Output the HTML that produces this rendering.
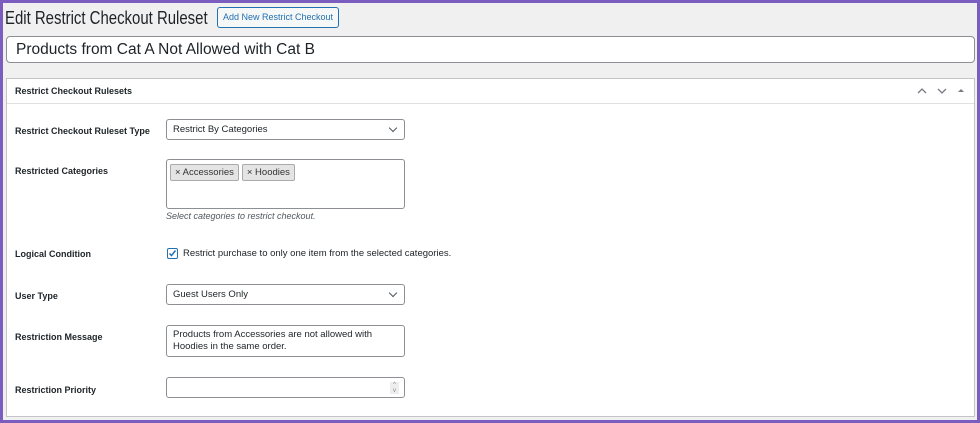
<!DOCTYPE html>
<html><head><style>
*{box-sizing:border-box}
body{margin:0;width:980px;height:423px;background:#7b5cbf;font-family:"Liberation Sans",sans-serif;color:#1d2327;overflow:hidden}
.wrap{position:absolute;left:3px;top:3px;right:3px;bottom:3px;background:#f0f0f1}
.abs{position:absolute;white-space:nowrap}
h1{position:absolute;left:2px;top:5px;margin:0;font-size:18px;font-weight:400;color:#1d2327;white-space:nowrap;transform:scaleX(0.83);transform-origin:left}
.btn{left:214px;top:4px;width:122px;height:21px;border:1px solid #2271b1;border-radius:3px;color:#2271b1;font-size:9px;line-height:19px;text-align:center;background:#f6f7f7}
.title{left:3px;top:33px;width:969px;height:27px;border:1px solid #8c8f94;border-radius:4px;background:#fff;font-size:15.5px;line-height:25px;padding-left:9px}
.panel{left:3px;top:75px;width:969px;height:339px;border:1px solid #c3c4c7;background:#fff}
.ph{height:25px;border-bottom:1px solid #e0e0e0;font-size:9px;font-weight:700;line-height:25px;padding-left:8px}
.lbl{font-size:9px;font-weight:700;left:8px}
.inp{left:159px;width:239px;border:1px solid #8c8f94;border-radius:3px;background:#fff;font-size:9.5px;padding-left:6px}
.chev{position:absolute;right:8px;top:5px;width:6px;height:6px;border-right:1.3px solid #50575e;border-bottom:1.3px solid #50575e;transform:rotate(45deg)}
.tag{display:inline-block;border:1px solid #aaa;background:#e4e4e4;border-radius:2px;font-size:9.5px;padding:2px 4px;margin:4px 0 0 3px;color:#333}
</style></head><body><div class="wrap">
<h1>Edit Restrict Checkout Ruleset</h1>
<div class="abs btn">Add New Restrict Checkout</div>
<div class="abs title">Products from Cat A Not Allowed with Cat B</div>
<div class="abs panel">
<div class="ph">Restrict Checkout Rulesets</div>
<svg class="abs" style="right:8px;top:7px" width="50" height="10"><path d="M2 7l4-4 4 4M22 3l4 4 4-4" stroke="#787c82" stroke-width="1.3" fill="none"/><path d="M42 6l3-3 3 3z" fill="#787c82"/></svg>
<div class="abs lbl" style="top:47px">Restrict Checkout Ruleset Type</div>
<div class="abs inp" style="top:40px;height:21px;line-height:19px">Restrict By Categories<span class="chev"></span></div>
<div class="abs lbl" style="top:87px">Restricted Categories</div>
<div class="abs inp" style="top:80px;height:50px;padding-left:0"><span class="tag">× Accessories</span><span class="tag">× Hoodies</span></div>
<div class="abs" style="left:159px;top:132px;font-size:9px;font-style:italic;color:#50575e">Select categories to restrict checkout.</div>
<div class="abs lbl" style="top:170px">Logical Condition</div>
<div class="abs" style="left:160px;top:169px;width:11px;height:11px;border:1px solid #2271b1;border-radius:2px"><svg width="9" height="9" style="position:absolute;left:0;top:0"><path d="M1.5 4.5l2 2 4-5" stroke="#2271b1" stroke-width="1.5" fill="none"/></svg></div>
<div class="abs" style="left:176px;top:169px;font-size:9.5px">Restrict purchase to only one item from the selected categories.</div>
<div class="abs lbl" style="top:212px">User Type</div>
<div class="abs inp" style="top:205px;height:21px;line-height:19px">Guest Users Only<span class="chev"></span></div>
<div class="abs lbl" style="top:253px">Restriction Message</div>
<div class="abs inp" style="top:246px;height:32px;line-height:12px;padding-top:3px">Products from Accessories are not allowed with<br>Hoodies in the same order.</div>
<div class="abs lbl" style="top:306px">Restriction Priority</div>
<div class="abs inp" style="top:298px;height:21px"><span style="position:absolute;right:5px;top:4px;width:9px;height:12px;background:#eee;font-size:6px;line-height:6px;text-align:center;color:#888">^<br>v</span></div>
</div>
</div></body></html>
